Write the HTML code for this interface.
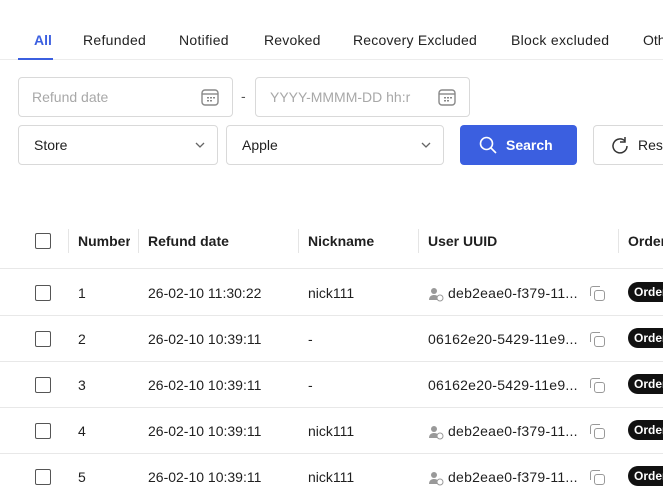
<!DOCTYPE html>
<html><head><style>
*{box-sizing:border-box;margin:0;padding:0}
body{width:663px;height:498px;overflow:hidden;background:#fff;font-family:"Liberation Sans",sans-serif;color:#1f1f1f;position:relative;font-size:14px}
.a{position:absolute;white-space:nowrap}
.tab{top:32px;font-size:14px;color:#222}
.inp{position:absolute;border:1px solid #d9d9d9;border-radius:4px;background:#fff}
.ph{color:#a8a8a8;font-size:14px}
.cb{position:absolute;width:16px;height:16px;border:1.5px solid #555;border-radius:2px;left:35px}
.hd{font-weight:bold;font-size:14px;top:233px}
.dv{position:absolute;top:229px;width:1px;height:24px;background:#e5e5e5}
.line{position:absolute;left:0;width:663px;height:1px;background:#e8e8e8}
.badge{position:absolute;left:628px;background:#111;color:#fff;font-size:12px;font-weight:bold;border-radius:10px;padding:3px 6px;height:20px}
.cp{position:absolute;left:594px;width:11px;height:11px;border:1.5px solid #999;border-radius:3px;background:#fff}
.cp:before{content:"";position:absolute;left:-5px;top:-5px;width:9px;height:9px;border-left:1.5px solid #999;border-top:1.5px solid #999;border-radius:3px 0 0 0}
</style></head><body>
<div class="a tab" style="left:34px;color:#3b5fe0;font-weight:bold">All</div>
<div class="a tab" style="left:83px;letter-spacing:0.3px">Refunded</div>
<div class="a tab" style="left:179px;letter-spacing:0.3px">Notified</div>
<div class="a tab" style="left:264px;letter-spacing:0.2px">Revoked</div>
<div class="a tab" style="left:353px;letter-spacing:0.2px">Recovery Excluded</div>
<div class="a tab" style="left:511px;letter-spacing:0.3px">Block excluded</div>
<div class="a tab" style="left:643px">Other</div>
<div class="line" style="top:59px;background:#ececec"></div>
<div class="a" style="left:18px;top:58px;width:35px;height:2px;background:#3b5fe0"></div>

<div class="inp" style="left:18px;top:77px;width:215px;height:40px"></div>
<div class="a ph" style="left:32px;top:89px">Refund date</div>
<svg class="a" style="left:200px;top:87px" width="20" height="20" viewBox="0 0 20 20"><rect x="2" y="3" width="16" height="15" rx="3" fill="none" stroke="#888" stroke-width="1.4"/><line x1="2" y1="7" x2="18" y2="7" stroke="#888" stroke-width="1.4"/><g fill="#888"><rect x="7" y="10" width="2" height="1.5"/><rect x="10" y="10" width="2" height="1.5"/><rect x="13" y="10" width="2" height="1.5"/><rect x="7" y="13" width="2" height="1.5"/><rect x="10" y="13" width="2" height="1.5"/></g></svg>
<div class="a" style="left:241px;top:88px;color:#555">-</div>
<div class="inp" style="left:255px;top:77px;width:215px;height:40px"></div>
<div class="a ph" style="left:270px;top:89px">YYYY-MMMM-DD hh:r</div>
<svg class="a" style="left:437px;top:87px" width="20" height="20" viewBox="0 0 20 20"><rect x="2" y="3" width="16" height="15" rx="3" fill="none" stroke="#888" stroke-width="1.4"/><line x1="2" y1="7" x2="18" y2="7" stroke="#888" stroke-width="1.4"/><g fill="#888"><rect x="7" y="10" width="2" height="1.5"/><rect x="10" y="10" width="2" height="1.5"/><rect x="13" y="10" width="2" height="1.5"/><rect x="7" y="13" width="2" height="1.5"/><rect x="10" y="13" width="2" height="1.5"/></g></svg>

<div class="inp" style="left:18px;top:125px;width:200px;height:40px"></div>
<div class="a" style="left:34px;top:137px">Store</div>
<svg class="a" style="left:194px;top:140px" width="12" height="10"><path d="M2 3l4 4 4-4" fill="none" stroke="#666" stroke-width="1.3"/></svg>
<div class="inp" style="left:226px;top:125px;width:218px;height:40px"></div>
<div class="a" style="left:242px;top:137px">Apple</div>
<svg class="a" style="left:420px;top:140px" width="12" height="10"><path d="M2 3l4 4 4-4" fill="none" stroke="#666" stroke-width="1.3"/></svg>
<div class="a" style="left:460px;top:125px;width:117px;height:40px;background:#3b5fe0;border-radius:4px"></div>
<svg class="a" style="left:478px;top:135px" width="20" height="20"><circle cx="8.5" cy="8.5" r="6" fill="none" stroke="#fff" stroke-width="1.6"/><line x1="13" y1="13" x2="18" y2="18" stroke="#fff" stroke-width="1.6"/></svg>
<div class="a" style="left:506px;top:137px;color:#fff;font-weight:bold">Search</div>
<div class="inp" style="left:593px;top:125px;width:90px;height:40px"></div>
<svg class="a" style="left:610px;top:135px" width="20" height="20"><path d="M15 6A7 7 0 1 0 17 11" fill="none" stroke="#333" stroke-width="1.5"/><path d="M15 2v5h-5" fill="none" stroke="#333" stroke-width="1.5"/></svg>
<div class="a" style="left:638px;top:137px">Reset</div>

<div class="cb" style="top:233px"></div>
<div class="dv" style="left:68px"></div><div class="dv" style="left:138px"></div><div class="dv" style="left:298px"></div><div class="dv" style="left:418px"></div><div class="dv" style="left:618px"></div>
<div class="a hd" style="left:78px;width:52px;overflow:hidden">Number</div>
<div class="a hd" style="left:148px">Refund date</div>
<div class="a hd" style="left:308px">Nickname</div>
<div class="a hd" style="left:428px">User UUID</div>
<div class="a hd" style="left:628px">Order</div>
<div class="line" style="top:268px"></div>

<div class="cb" style="top:285px"></div><div class="a" style="left:78px;top:285px">1</div><div class="a" style="left:148px;top:285px">26-02-10 11:30:22</div><div class="a" style="left:308px;top:285px">nick111</div>
<svg class="a" style="left:428px;top:286px" width="16" height="16"><circle cx="6" cy="5" r="3" fill="#999"/><path d="M1 14c0-4 3-5 5-5s4 1 5 2v3z" fill="#999"/><circle cx="12" cy="12" r="3" fill="#fff" stroke="#999"/></svg>
<div class="a" style="left:448px;top:285px;letter-spacing:0.25px">deb2eae0-f379-11...</div><div class="cp" style="top:290px"></div><div class="badge" style="top:282px">Order</div>
<div class="line" style="top:315px"></div>

<div class="cb" style="top:331px"></div><div class="a" style="left:78px;top:331px">2</div><div class="a" style="left:148px;top:331px">26-02-10 10:39:11</div><div class="a" style="left:308px;top:331px">-</div>
<div class="a" style="left:428px;top:331px;letter-spacing:0.25px">06162e20-5429-11e9...</div><div class="cp" style="top:336px"></div><div class="badge" style="top:328px">Order</div>
<div class="line" style="top:361px"></div>

<div class="cb" style="top:377px"></div><div class="a" style="left:78px;top:377px">3</div><div class="a" style="left:148px;top:377px">26-02-10 10:39:11</div><div class="a" style="left:308px;top:377px">-</div>
<div class="a" style="left:428px;top:377px;letter-spacing:0.25px">06162e20-5429-11e9...</div><div class="cp" style="top:382px"></div><div class="badge" style="top:374px">Order</div>
<div class="line" style="top:407px"></div>

<div class="cb" style="top:423px"></div><div class="a" style="left:78px;top:423px">4</div><div class="a" style="left:148px;top:423px">26-02-10 10:39:11</div><div class="a" style="left:308px;top:423px">nick111</div>
<svg class="a" style="left:428px;top:424px" width="16" height="16"><circle cx="6" cy="5" r="3" fill="#999"/><path d="M1 14c0-4 3-5 5-5s4 1 5 2v3z" fill="#999"/><circle cx="12" cy="12" r="3" fill="#fff" stroke="#999"/></svg>
<div class="a" style="left:448px;top:423px;letter-spacing:0.25px">deb2eae0-f379-11...</div><div class="cp" style="top:428px"></div><div class="badge" style="top:420px">Order</div>
<div class="line" style="top:453px"></div>

<div class="cb" style="top:469px"></div><div class="a" style="left:78px;top:469px">5</div><div class="a" style="left:148px;top:469px">26-02-10 10:39:11</div><div class="a" style="left:308px;top:469px">nick111</div>
<svg class="a" style="left:428px;top:470px" width="16" height="16"><circle cx="6" cy="5" r="3" fill="#999"/><path d="M1 14c0-4 3-5 5-5s4 1 5 2v3z" fill="#999"/><circle cx="12" cy="12" r="3" fill="#fff" stroke="#999"/></svg>
<div class="a" style="left:448px;top:469px;letter-spacing:0.25px">deb2eae0-f379-11...</div><div class="cp" style="top:474px"></div><div class="badge" style="top:466px">Order</div>
</body></html>
